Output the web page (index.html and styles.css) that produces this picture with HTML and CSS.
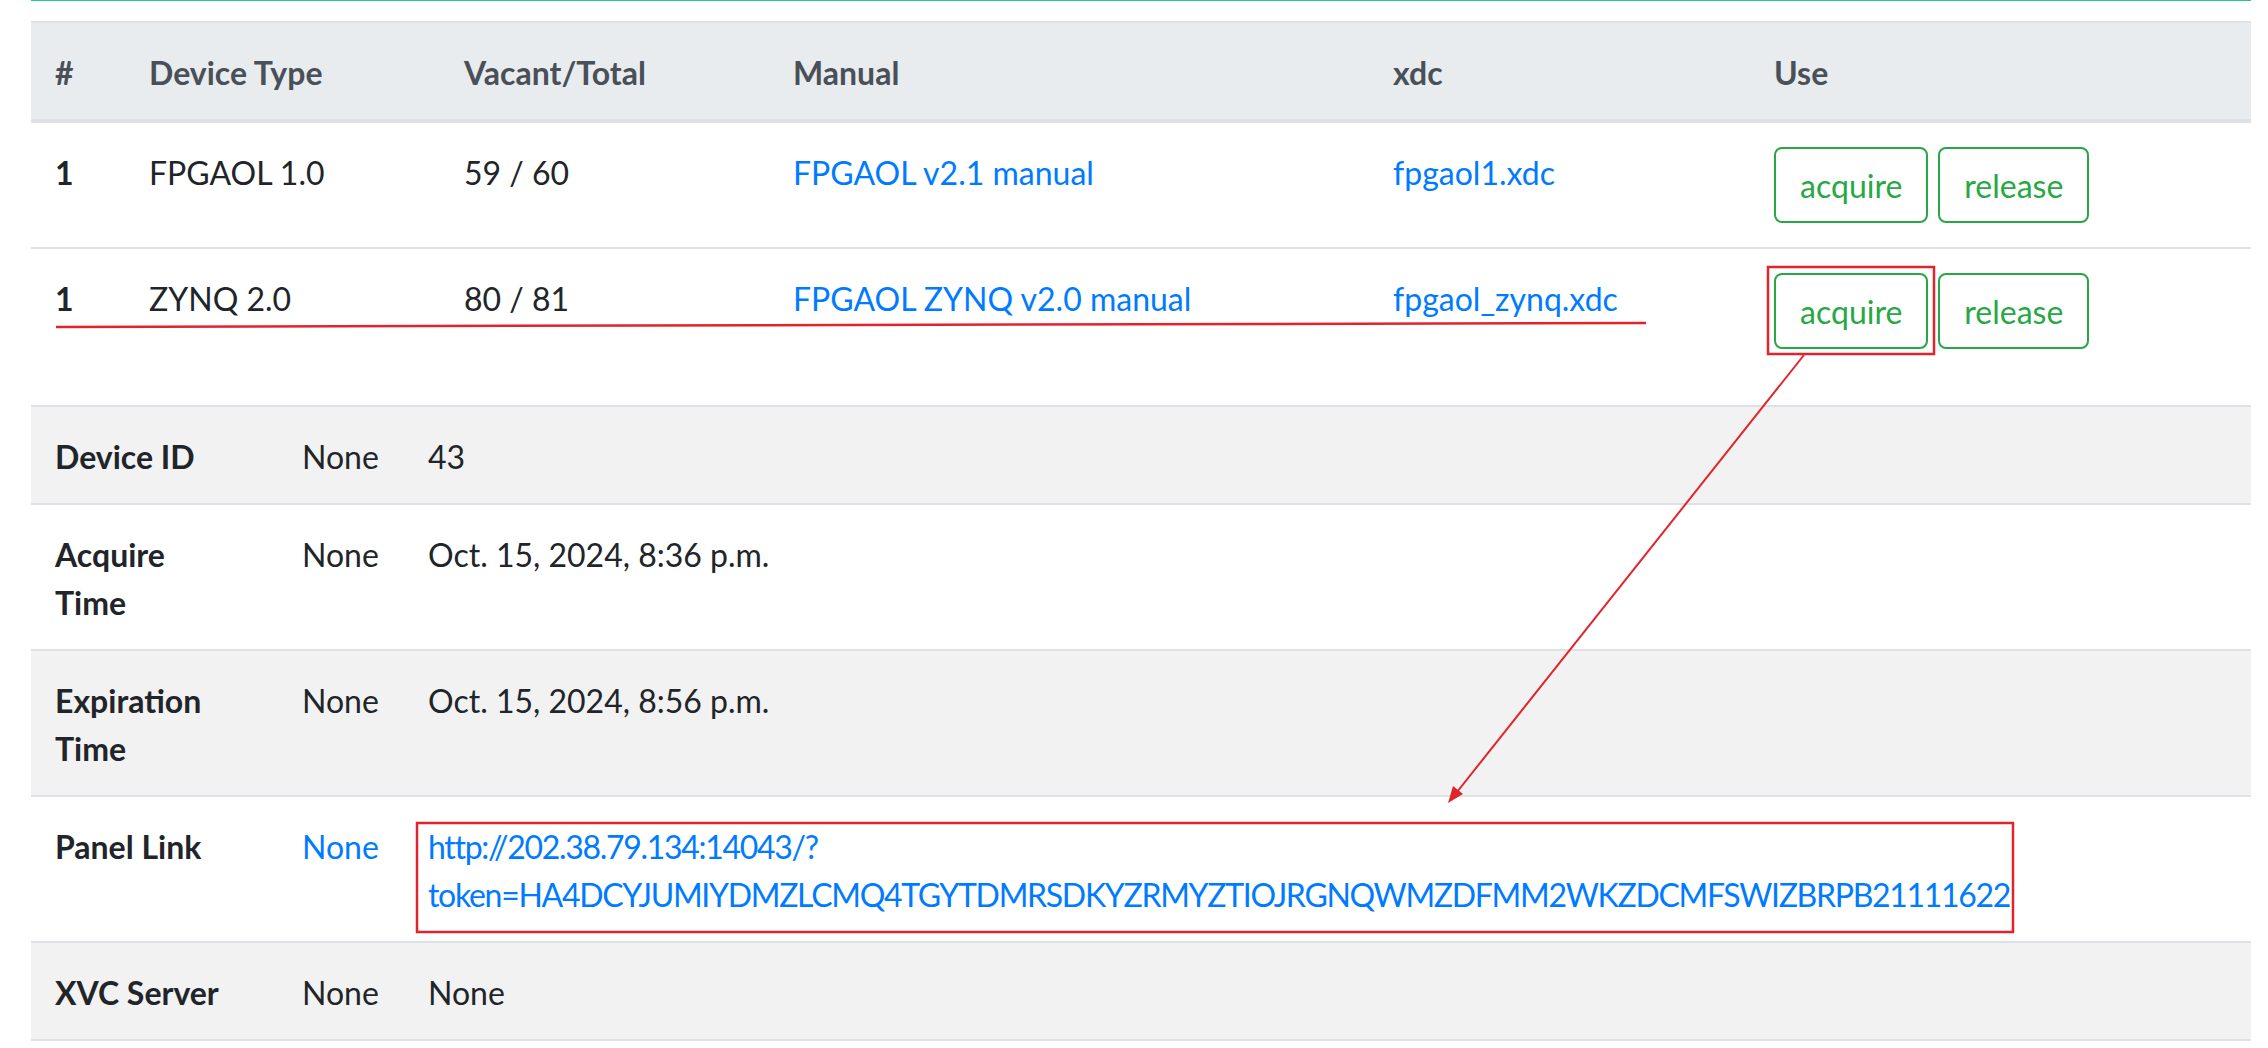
FILE: index.html
```html
<!DOCTYPE html>
<html lang="en">
<head>
    <meta charset="UTF-8">
    <meta name="viewport" content="width=device-width, initial-scale=1.0">
    <title>FPGAOL Devices</title>
    <link rel="stylesheet" href="styles.css">
</head>
<body>

    <div class="page">
        <div class="top-rule"></div>

        <!-- Device types -->
        <table class="table device-list">
            <thead>
                <tr>
                    <th class="col-num">#</th>
                    <th class="col-type">Device Type</th>
                    <th class="col-count">Vacant/Total</th>
                    <th class="col-manual">Manual</th>
                    <th class="col-xdc">xdc</th>
                    <th class="col-use">Use</th>
                </tr>
            </thead>
            <tbody>
                <tr>
                    <th>1</th>
                    <td>FPGAOL 1.0</td>
                    <td>59 / 60</td>
                    <td><a href="#">FPGAOL v2.1 manual</a></td>
                    <td><a href="#">fpgaol1.xdc</a></td>
                    <td class="use-cell">
                        <div class="actions">
                            <button class="btn">acquire</button>
                            <button class="btn">release</button>
                        </div>
                    </td>
                </tr>
                <tr>
                    <th>1</th>
                    <td>ZYNQ 2.0</td>
                    <td>80 / 81</td>
                    <td><a href="#">FPGAOL ZYNQ v2.0 manual</a></td>
                    <td><a href="#">fpgaol_zynq.xdc</a></td>
                    <td class="use-cell">
                        <div class="actions actions-open">
                            <button class="btn">acquire</button>
                            <button class="btn">release</button>
                        </div>
                    </td>
                </tr>
            </tbody>
        </table>

        <!-- Acquired device -->
        <table class="table device-info">
            <tbody>
                <tr>
                    <th class="col-label">Device ID</th>
                    <td class="col-none">None</td>
                    <td>43</td>
                </tr>
                <tr>
                    <th><span class="label">Acquire Time</span></th>
                    <td>None</td>
                    <td>Oct. 15, 2024, 8:36 p.m.</td>
                </tr>
                <tr>
                    <th><span class="label">Expiration Time</span></th>
                    <td>None</td>
                    <td>Oct. 15, 2024, 8:56 p.m.</td>
                </tr>
                <tr>
                    <th>Panel Link</th>
                    <td><a href="#">None</a></td>
                    <td><a class="panel-link" href="#">http://202.38.79.134:14043/?token=HA4DCYJUMIYDMZLCMQ4TGYTDMRSDKYZRMYZTIOJRGNQWMZDFMM2WKZDCMFSWIZBRPB21111622</a></td>
                </tr>
                <tr>
                    <th>XVC Server</th>
                    <td>None</td>
                    <td>None</td>
                </tr>
            </tbody>
        </table>
    </div>

    <!-- red marks drawn over the screenshot -->
    <svg class="marks" width="2268" height="1048" viewBox="0 0 2268 1048">
        <line x1="56" y1="327" x2="1646" y2="323" stroke="#e1232b" stroke-width="2.5"/>
        <rect x="1768" y="267" width="166" height="87" fill="none" stroke="#e1232b" stroke-width="2.5"/>
        <line x1="1804" y1="355" x2="1457" y2="792" stroke="#e1232b" stroke-width="2"/>
        <polygon points="1448,803 1463,794 1453,786" fill="#e1232b"/>
        <rect x="417" y="823" width="1596" height="109" fill="none" stroke="#e1232b" stroke-width="2.5"/>
    </svg>

</body>
</html>
```

FILE: styles.css
```css
body {
    margin: 0;
    font-family: Lato, "Liberation Sans", sans-serif;
    font-size: 32px;
    line-height: 48px;
    color: #212529;
    background-color: #fff;
    position: relative;
}
.page {
    padding: 0 17px 0 31px;
}
.top-rule {
    height: 1px;
    background-color: #20c997;
}
.table {
    width: 100%;
    border-collapse: collapse;
    table-layout: fixed;
}
.table th,
.table td {
    padding: 26px 24px 22px;
    border-top: 2px solid #dee2e6;
    vertical-align: top;
    text-align: left;
}
.table th {
    font-weight: 700;
}
.table a {
    color: #007bff;
    text-decoration: none;
}
.device-list {
    margin-top: 20px;
}
.device-list thead th {
    background-color: #e9ecef;
    color: #495057;
    border-bottom: 4px solid #dee2e6;
}
.col-num { width: 46px; }
.col-type { width: 267px; }
.col-count { width: 281px; }
.col-manual { width: 552px; }
.col-xdc { width: 333px; }
.col-use { width: 453px; }

.table .use-cell {
    padding: 24px;
}
.actions {
    display: flex;
    gap: 10px;
}
.actions-open {
    margin-bottom: 32px;
}
.btn {
    font-family: inherit;
    font-size: 32px;
    line-height: 48px;
    padding: 13px 24px 11px;
    color: #28a745;
    background-color: transparent;
    border: 2px solid #28a745;
    border-radius: 8px;
    cursor: pointer;
}

.device-info {
    border-bottom: 2px solid #dee2e6;
}
.device-info tr:nth-child(odd) {
    background-color: #f2f2f2;
}
.col-label { width: 199px; }
.col-none { width: 78px; }
.label {
    display: block;
    max-width: 170px;
}
.panel-link {
    letter-spacing: -1.3px;
}

.marks {
    position: absolute;
    top: 0;
    left: 0;
    pointer-events: none;
}
```
